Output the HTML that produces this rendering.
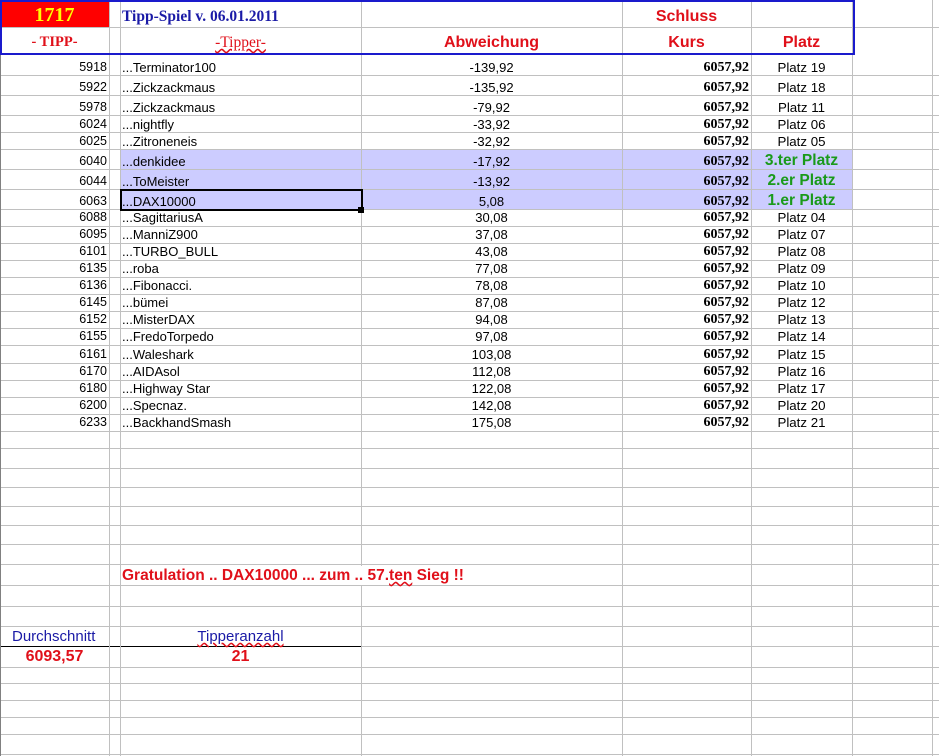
<!DOCTYPE html>
<html><head><meta charset="utf-8"><style>
body{margin:0;width:939px;height:756px;overflow:hidden;background:#fff;position:relative;font-family:"Liberation Sans",Arial,sans-serif;font-size:12px;color:#000}
.hl{position:absolute;left:0;width:939px;height:1px;background:#c0c0c0}
.vl{position:absolute;top:0;width:1px;height:756px;background:#c0c0c0}
.r{position:absolute;left:0;width:939px}
.c{position:absolute;bottom:1px;line-height:15px;white-space:nowrap}
.a{left:0;width:107px;text-align:right;font-size:12.5px}
.n{left:122px;font-size:13px}
.d{left:361px;width:261px;text-align:center;font-size:13px}
.k{left:622px;width:127px;text-align:right;font-family:"Liberation Serif",serif;font-weight:bold;font-size:14px}
.p{left:751px;width:101px;text-align:center;font-size:13.3px}
.g{color:#1a9a1a;font-weight:bold;font-size:15.5px}
.t{position:absolute;white-space:nowrap}
.red{color:#e0101a}
</style></head><body>
<div style="position:absolute;left:120px;top:150px;width:732px;height:60px;background:#ccccff"></div>
<div style="position:absolute;left:1px;top:2px;width:108px;height:25px;background:#ff0000"></div>

<div class="hl" style="top:27px"></div>
<div class="hl" style="top:75px"></div><div class="hl" style="top:95px"></div><div class="hl" style="top:115px"></div>
<div class="hl" style="top:132px"></div><div class="hl" style="top:149px"></div><div class="hl" style="top:169px"></div>
<div class="hl" style="top:189px"></div><div class="hl" style="top:209px"></div><div class="hl" style="top:226px"></div>
<div class="hl" style="top:243px"></div><div class="hl" style="top:260px"></div><div class="hl" style="top:277px"></div>
<div class="hl" style="top:294px"></div><div class="hl" style="top:311px"></div><div class="hl" style="top:328px"></div>
<div class="hl" style="top:345px"></div><div class="hl" style="top:363px"></div><div class="hl" style="top:380px"></div>
<div class="hl" style="top:397px"></div><div class="hl" style="top:414px"></div><div class="hl" style="top:431px"></div>
<div class="hl" style="top:448px"></div><div class="hl" style="top:468px"></div><div class="hl" style="top:487px"></div>
<div class="hl" style="top:506px"></div><div class="hl" style="top:525px"></div><div class="hl" style="top:544px"></div>
<div class="hl" style="top:564px"></div><div class="hl" style="top:585px"></div><div class="hl" style="top:606px"></div>
<div class="hl" style="top:626px"></div><div class="hl" style="top:667px"></div>
<div class="hl" style="top:683px"></div><div class="hl" style="top:700px"></div><div class="hl" style="top:717px"></div>
<div class="hl" style="top:734px"></div><div class="hl" style="top:754px"></div>
<div class="hl" style="top:646px;left:361px;width:578px"></div>
<div class="hl" style="top:646px;width:361px;background:#000"></div>

<div class="vl" style="left:0;background:#808080"></div>
<div class="vl" style="left:109px"></div><div class="vl" style="left:120px"></div>
<div class="vl" style="left:361px"></div><div class="vl" style="left:622px"></div>
<div class="vl" style="left:751px"></div><div class="vl" style="left:852px"></div>
<div class="vl" style="left:932px"></div>

<div style="position:absolute;left:0;top:0;width:851px;height:51px;border:2px solid #1a1acc"></div>
<div style="position:absolute;left:120px;top:189px;width:239px;height:18px;border:2px solid #000"></div>
<div style="position:absolute;left:358px;top:207px;width:6px;height:6px;background:#000"></div>

<div class="t" style="left:0;width:109px;top:4px;text-align:center;font-family:'Liberation Serif',serif;font-weight:bold;font-size:20px;color:#ffff00;line-height:22px">1717</div>
<div class="t" style="left:122px;top:8px;font-family:'Liberation Serif',serif;font-weight:bold;font-size:15.5px;color:#1a1aa6;line-height:18px">Tipp-Spiel v. 06.01.2011</div>
<div class="t red" style="left:622px;width:129px;top:7px;text-align:center;font-weight:bold;font-size:16px;line-height:19px">Schluss</div>
<div class="t red" style="left:0;width:109px;top:34px;text-align:center;font-family:'Liberation Serif',serif;font-weight:bold;font-size:14.5px;line-height:17px">- TIPP-</div>
<div class="t red" style="left:120px;width:241px;top:34px;text-align:center;font-family:'Liberation Serif',serif;font-size:15.5px;line-height:17px;text-decoration:underline wavy #e0101a">-Tipper-</div>
<div class="t red" style="left:361px;width:261px;top:33px;text-align:center;font-weight:bold;font-size:16px;line-height:19px">Abweichung</div>
<div class="t red" style="left:622px;width:129px;top:33px;text-align:center;font-weight:bold;font-size:16px;line-height:19px">Kurs</div>
<div class="t red" style="left:751px;width:101px;top:33px;text-align:center;font-weight:bold;font-size:16px;line-height:19px">Platz</div>

<div class="r" style="top:53px;height:23px"><span class="c a">5918</span><span class="c n">...Terminator100</span><span class="c d">-139,92</span><span class="c k">6057,92</span><span class="c p">Platz 19</span></div>
<div class="r" style="top:76px;height:20px"><span class="c a">5922</span><span class="c n">...Zickzackmaus</span><span class="c d">-135,92</span><span class="c k">6057,92</span><span class="c p">Platz 18</span></div>
<div class="r" style="top:96px;height:20px"><span class="c a">5978</span><span class="c n">...Zickzackmaus</span><span class="c d">-79,92</span><span class="c k">6057,92</span><span class="c p">Platz 11</span></div>
<div class="r" style="top:116px;height:17px"><span class="c a">6024</span><span class="c n">...nightfly</span><span class="c d">-33,92</span><span class="c k">6057,92</span><span class="c p">Platz 06</span></div>
<div class="r" style="top:133px;height:17px"><span class="c a">6025</span><span class="c n">...Zitroneneis</span><span class="c d">-32,92</span><span class="c k">6057,92</span><span class="c p">Platz 05</span></div>
<div class="r" style="top:150px;height:20px"><span class="c a">6040</span><span class="c n">...denkidee</span><span class="c d">-17,92</span><span class="c k">6057,92</span><span class="c p g" style="bottom:2px">3.ter Platz</span></div>
<div class="r" style="top:170px;height:20px"><span class="c a">6044</span><span class="c n">...ToMeister</span><span class="c d">-13,92</span><span class="c k">6057,92</span><span class="c p g" style="bottom:2px">2.er Platz</span></div>
<div class="r" style="top:190px;height:20px"><span class="c a">6063</span><span class="c n">...DAX10000</span><span class="c d">5,08</span><span class="c k">6057,92</span><span class="c p g" style="bottom:2px">1.er Platz</span></div>
<div class="r" style="top:209px;height:17px"><span class="c a">6088</span><span class="c n">...SagittariusA</span><span class="c d">30,08</span><span class="c k">6057,92</span><span class="c p">Platz 04</span></div>
<div class="r" style="top:226px;height:17px"><span class="c a">6095</span><span class="c n">...ManniZ900</span><span class="c d">37,08</span><span class="c k">6057,92</span><span class="c p">Platz 07</span></div>
<div class="r" style="top:243px;height:17px"><span class="c a">6101</span><span class="c n">...TURBO_BULL</span><span class="c d">43,08</span><span class="c k">6057,92</span><span class="c p">Platz 08</span></div>
<div class="r" style="top:260px;height:17px"><span class="c a">6135</span><span class="c n">...roba</span><span class="c d">77,08</span><span class="c k">6057,92</span><span class="c p">Platz 09</span></div>
<div class="r" style="top:277px;height:17px"><span class="c a">6136</span><span class="c n">...Fibonacci.</span><span class="c d">78,08</span><span class="c k">6057,92</span><span class="c p">Platz 10</span></div>
<div class="r" style="top:294px;height:17px"><span class="c a">6145</span><span class="c n">...bümei</span><span class="c d">87,08</span><span class="c k">6057,92</span><span class="c p">Platz 12</span></div>
<div class="r" style="top:311px;height:17px"><span class="c a">6152</span><span class="c n">...MisterDAX</span><span class="c d">94,08</span><span class="c k">6057,92</span><span class="c p">Platz 13</span></div>
<div class="r" style="top:328px;height:17px"><span class="c a">6155</span><span class="c n">...FredoTorpedo</span><span class="c d">97,08</span><span class="c k">6057,92</span><span class="c p">Platz 14</span></div>
<div class="r" style="top:345px;height:18px"><span class="c a">6161</span><span class="c n">...Waleshark</span><span class="c d">103,08</span><span class="c k">6057,92</span><span class="c p">Platz 15</span></div>
<div class="r" style="top:363px;height:17px"><span class="c a">6170</span><span class="c n">...AIDAsol</span><span class="c d">112,08</span><span class="c k">6057,92</span><span class="c p">Platz 16</span></div>
<div class="r" style="top:380px;height:17px"><span class="c a">6180</span><span class="c n">...Highway Star</span><span class="c d">122,08</span><span class="c k">6057,92</span><span class="c p">Platz 17</span></div>
<div class="r" style="top:397px;height:17px"><span class="c a">6200</span><span class="c n">...Specnaz.</span><span class="c d">142,08</span><span class="c k">6057,92</span><span class="c p">Platz 20</span></div>
<div class="r" style="top:414px;height:17px"><span class="c a">6233</span><span class="c n">...BackhandSmash</span><span class="c d">175,08</span><span class="c k">6057,92</span><span class="c p">Platz 21</span></div>

<div class="t red" style="left:122px;top:566px;font-weight:bold;font-size:15.5px;line-height:19px;background:#fff;padding-right:2px">Gratulation .. DAX10000 ... zum .. 57.<span style="text-decoration:underline wavy #e0101a">ten</span> Sieg !!</div>
<div class="t" style="left:12px;top:628px;font-size:15px;color:#1a1aa6;line-height:17px">Durchschnitt</div>
<div class="t" style="left:120px;width:241px;top:628px;text-align:center;font-size:15px;color:#1a1aa6;line-height:17px;text-decoration:underline wavy #e0101a">Tipperanzahl</div>
<div class="t red" style="left:0;width:109px;top:648px;text-align:center;font-weight:bold;font-size:16px;line-height:18px">6093,57</div>
<div class="t red" style="left:120px;width:241px;top:648px;text-align:center;font-weight:bold;font-size:16px;line-height:18px">21</div>
</body></html>
